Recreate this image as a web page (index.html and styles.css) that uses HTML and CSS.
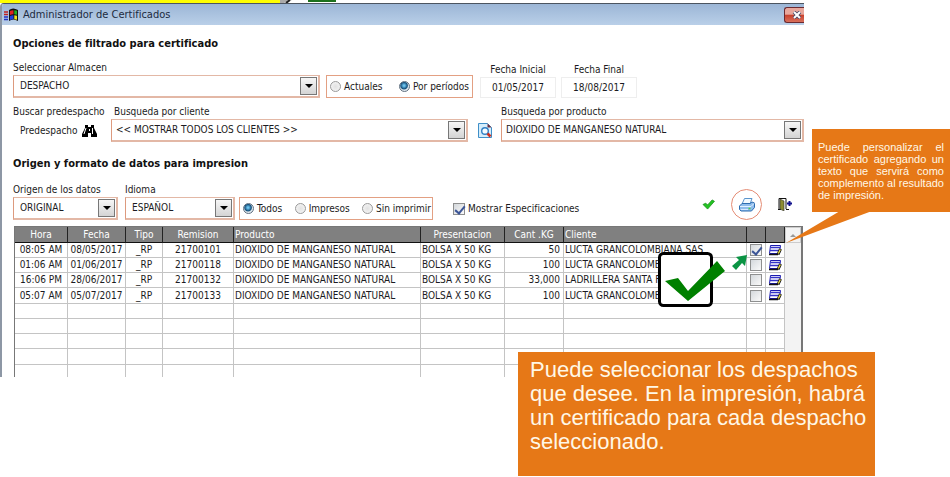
FILE: index.html
```html
<!DOCTYPE html>
<html lang="es">
<head>
<meta charset="utf-8">
<title>Administrador de Certificados</title>
<link rel="stylesheet" href="styles.css">
</head>
<body>
<svg class="defs" aria-hidden="true">
  <symbol id="memo" viewBox="0 0 14 11">
    <path d="M2.500 .5h10l-1 8h-10z" fill="#fff" stroke="#1a1ab0"/>
    <path d="M2.500 2.500h9.500M2 5.500h9.500" stroke="#3434c8" stroke-width="1.400"/>
    <path d="M1 9.500h9" stroke="#111" stroke-width="1.500"/>
    <path d="M12.500 4l-2.500 5.500" stroke="#111" stroke-width="3"/>
    <path d="M12.300 4.500l-2 4" stroke="#f0e040" stroke-width="1.400"/>
  </symbol>
</svg>
<div class="page">
  <main class="screen">
    <div class="backdrop">
      <svg class="backdrop-art" viewBox="0 0 60 3" aria-hidden="true"><path d="M0 0h12L4 3H0z" fill="#aaa"/><path d="M6 3l4-3" stroke="#222" stroke-width="2"/><path d="M28 0h28v2H28z" fill="#1c701c"/></svg>
    </div>
    <section class="window">
      <header class="titlebar">
        <svg class="logo" viewBox="0 0 16 14" aria-hidden="true">
          <path d="M6 2q4-3 9 0v11q-5-3-9 0z" fill="#111"/>
          <path d="M7 3q2-1 3.500-.8v4Q9 6 7 7z" fill="#e02020"/><path d="M11.300 2.200l2.700.6v4l-2.700-.6z" fill="#20b020"/>
          <path d="M7 8q2-1 3.500-.8v4Q9 11 7 12z" fill="#2040e0"/><path d="M11.300 7.200l2.700.6v4l-2.700-.6z" fill="#f0e020"/>
          <path d="M1 4h4M1 6.500h4" stroke="#c02020" stroke-width="1.400"/><path d="M1 9h4M1 11.500h4" stroke="#2030c0" stroke-width="1.400"/>
        </svg>
        <h1>Administrador de Certificados</h1>
        <button class="close" aria-label="Cerrar"><svg viewBox="0 0 10 8" aria-hidden="true"><path d="M2 1l6 6M8 1L2 7" stroke="#444a66" stroke-width="3.600"/><path d="M2 1l6 6M8 1L2 7" stroke="#fff" stroke-width="2"/></svg></button>
      </header>
      <form class="content">
        <h2>Opciones de filtrado para certificado</h2>
        <div class="row row-a">
          <div class="field almacen"><label for="almacen">Seleccionar Almacen</label>
            <div class="combo"><select id="almacen"><option>DESPACHO</option></select></div></div>
          <fieldset class="radios periodo" aria-label="Período">
            <label><input type="radio" name="per">Actuales</label>
            <label><input type="radio" name="per" checked>Por períodos</label>
          </fieldset>
          <div class="field date"><label for="ini">Fecha Inicial</label><input id="ini" type="text" value="01/05/2017"></div>
          <div class="field date"><label for="fin">Fecha Final</label><input id="fin" type="text" value="18/08/2017"></div>
        </div>
        <div class="row row-b">
          <div class="field pre"><span class="label">Buscar predespacho</span>
            <button type="button" class="find">Predespacho
              <svg viewBox="0 0 15 12" width="15" height="12" aria-hidden="true"><path d="M3 0h3v2h3V0h3v3l3 6v3H9V8H6v4H0V9l3-6z" fill="#000"/><path d="M4 3L2 9M10.500 3v6" stroke="#fff"/><path d="M7 4h1v2H7z" fill="#fff"/></svg>
            </button></div>
          <div class="field cliente"><label for="cliente">Busqueda por cliente</label>
            <div class="combo search"><select id="cliente"><option>&lt;&lt; MOSTRAR TODOS LOS CLIENTES &gt;&gt;</option></select></div></div>
          <button type="button" class="icon preview" aria-label="Vista previa"><svg viewBox="0 0 14 15" width="14" height="15" aria-hidden="true"><path d="M.5.500h9l4 4v10H.5z" fill="#d5edfb" stroke="#3f8fc8"/><path d="M9.500.500l4 4h-4z" fill="#703040"/><circle cx="7" cy="8" r="3.300" fill="#f4fbff" stroke="#2f7fc4" stroke-width="1.400"/><path d="M9.500 10.500l3 3" stroke="#d03020" stroke-width="2.600"/></svg></button>
          <div class="field producto"><label for="producto">Busqueda por producto</label>
            <div class="combo search"><select id="producto"><option>DIOXIDO DE MANGANESO NATURAL</option></select></div></div>
        </div>
        <h2>Origen y formato de datos para impresion</h2>
        <div class="row row-c">
          <div class="field origen"><label for="origen">Origen de los datos</label>
            <div class="combo"><select id="origen"><option>ORIGINAL</option></select></div></div>
          <div class="field idioma"><label for="idioma">Idioma</label>
            <div class="combo"><select id="idioma"><option>ESPAÑOL</option></select></div></div>
          <fieldset class="radios estado" aria-label="Estado">
            <label><input type="radio" name="est" checked>Todos</label>
            <label><input type="radio" name="est">Impresos</label>
            <label><input type="radio" name="est">Sin imprimir</label>
          </fieldset>
          <label class="specs"><input type="checkbox" checked>Mostrar Especificaciones</label>
          <div class="actions">
            <button type="button" class="icon" aria-label="Aceptar"><svg viewBox="0 0 14 12" width="13" height="11" aria-hidden="true"><path d="M1 6l3-1.500 2 2L11 1l2.500 1.500L6 11z" fill="#22c322" stroke="#128a12" stroke-width=".8"/></svg></button>
            <button type="button" class="icon print" aria-label="Imprimir"><svg viewBox="0 0 16 14" width="16" height="14" aria-hidden="true"><path d="M5.500 .5h7.500L11 6H3z" fill="#f2faff" stroke="#5a95cc"/><path d="M3 5.500h8l2-1.500 2.500 1v4.500l-3 3.500H2L.5 11.500V8z" fill="#8fbdec" stroke="#2d6cb0"/><path d="M1 8.500h11l3-3" stroke="#e4f2ff" fill="none"/><path d="M2 11.500h7" stroke="#d6eaff"/><path d="M9.500 10.500h2" stroke="#50d040" stroke-width="1.400"/></svg></button>
            <button type="button" class="icon" aria-label="Salir"><svg viewBox="0 0 15 13" width="15" height="13" aria-hidden="true"><path d="M1 11V.5h7V11M0 11.500h3M8 11.500h3" fill="none" stroke="#111"/><path d="M2 1l4 2v10l-4-2z" fill="#8c8c30" stroke="#333" stroke-width=".6"/><path d="M9 5.500h5M11.500 3v5" stroke="#10108c" stroke-width="2"/></svg></button>
          </div>
        </div>
        <div class="grid">
          <table>
            <colgroup><col class="c-hora"><col class="c-fecha"><col class="c-tipo"><col class="c-rem"><col class="c-prod"><col class="c-pres"><col class="c-cant"><col><col class="c-ico"><col class="c-ico"></colgroup>
            <thead><tr><th>Hora</th><th>Fecha</th><th>Tipo</th><th>Remision</th><th class="l">Producto</th><th>Presentacion</th><th>Cant .KG</th><th class="l">Cliente</th><th></th><th></th></tr></thead>
            <tbody>
              <tr><td>08:05 AM</td><td>08/05/2017</td><td>_RP</td><td>21700101</td><td class="l">DIOXIDO DE MANGANESO NATURAL</td><td class="l">BOLSA X 50 KG</td><td class="r">50</td><td class="l">LUCTA GRANCOLOMBIANA SAS</td><td><input type="checkbox" aria-label="Seleccionar 21700101" checked></td><td><svg class="memo"><use href="#memo"/></svg></td></tr>
              <tr><td>01:06 AM</td><td>01/06/2017</td><td>_RP</td><td>21700118</td><td class="l">DIOXIDO DE MANGANESO NATURAL</td><td class="l">BOLSA X 50 KG</td><td class="r">100</td><td class="l">LUCTA GRANCOLOMB</td><td><input type="checkbox" aria-label="Seleccionar 21700118"></td><td><svg class="memo"><use href="#memo"/></svg></td></tr>
              <tr><td>16:06 PM</td><td>28/06/2017</td><td>_RP</td><td>21700132</td><td class="l">DIOXIDO DE MANGANESO NATURAL</td><td class="l">BOLSA X 50 KG</td><td class="r">33,000</td><td class="l">LADRILLERA SANTA F</td><td><input type="checkbox" aria-label="Seleccionar 21700132"></td><td><svg class="memo"><use href="#memo"/></svg></td></tr>
              <tr><td>05:07 AM</td><td>05/07/2017</td><td>_RP</td><td>21700133</td><td class="l">DIOXIDO DE MANGANESO NATURAL</td><td class="l">BOLSA X 50 KG</td><td class="r">100</td><td class="l">LUCTA GRANCOLOMB</td><td><input type="checkbox" aria-label="Seleccionar 21700133"></td><td><svg class="memo"><use href="#memo"/></svg></td></tr>
              <tr><td></td><td></td><td></td><td></td><td></td><td></td><td></td><td></td><td></td><td></td></tr>
              <tr><td></td><td></td><td></td><td></td><td></td><td></td><td></td><td></td><td></td><td></td></tr>
              <tr><td></td><td></td><td></td><td></td><td></td><td></td><td></td><td></td><td></td><td></td></tr>
              <tr><td></td><td></td><td></td><td></td><td></td><td></td><td></td><td></td><td></td><td></td></tr>
              <tr class="cut"><td></td><td></td><td></td><td></td><td></td><td></td><td></td><td></td><td></td><td></td></tr>
            </tbody>
          </table>
          <div class="scroll"><span class="up"></span></div>
          <svg class="bigcheck" viewBox="0 0 92 58" width="92" height="58" aria-hidden="true">
            <rect x="2.500" y="3.500" width="52" height="52" rx="4" fill="#fff" stroke="#000" stroke-width="3"/>
            <path d="M8 31l13-3 10 13 29-30 8 10-37 30z" fill="#008000"/>
            <path d="M75 16l7-6-3-3 11-2-2 11-3-3-6 7z" fill="#0b9444"/>
          </svg>
        </div>
      </form>
    </section>
  </main>
  <aside class="note small">
    <p>Puede personalizar el certificado agregando un texto que servirá como complemento al resultado de impresión.</p>
    <svg class="tail" viewBox="0 0 86 32" width="86" height="32" aria-hidden="true"><path d="M0 32L54 0h32z" fill="#e67817"/></svg>
  </aside>
  <aside class="note large"><p>Puede seleccionar los despachos que desee. En la impresión, habrá un certificado para cada despacho seleccionado.</p></aside>
</div>
</body>
</html>
```

FILE: styles.css
```css
* { box-sizing: border-box; }
body { margin: 0; background: #fff; color: #1b1b22; font: 10px/14px "DejaVu Sans Condensed", "Noto Sans", sans-serif; }
h1, h2, p { margin: 0; }
button, input, select { font: inherit; color: inherit; }
button { background: none; border: 0; padding: 0; }
.defs { position: absolute; width: 0; height: 0; }

.page { position: relative; display: grid; grid-template-columns: minmax(0, 1fr) 138px; column-gap: 8px; align-items: start; min-height: 100vh; }
.backdrop { height: 3px; background: linear-gradient(90deg, #ff0 280px, #fff 280px); }
.backdrop-art { display: block; width: 60px; height: 3px; margin-left: 280px; }

.window { border-left: 2px solid #8d97a5; border-top: 1px solid #4c5560; border-top-left-radius: 4px; overflow: hidden; }
.titlebar { display: flex; align-items: center; gap: 4px; height: 21px; padding-left: 1px; background: linear-gradient(#9cb6d6, #b9cfe8); }
.logo { width: 16px; height: 14px; }
h1 { flex: 1; font-size: 11px; font-weight: 400; color: #1c2a40; }
.close { display: flex; align-items: center; justify-content: flex-end; width: 20px; height: 16px; padding-right: 2px; border: 1px solid #6b2a30; border-right: 0; border-radius: 3px 0 0 3px; background: linear-gradient(#e8a79c 45%, #c8402c 50%, #d8705c); }
.close svg { width: 10px; height: 8px; }

.content { padding: 11px 0 0 11px; }
h2 { font-size: 11px; line-height: 16px; font-weight: 700; color: #111; }
.row { display: flex; align-items: flex-end; }
.row-a { margin-top: 8px; }
.row-b { margin: 6px 0 14px; }
.row-c { margin-top: 10px; }
.field { display: flex; flex-direction: column; }
.field > label, .label { height: 15px; line-height: 15px; white-space: nowrap; }

.combo { position: relative; border: 2px solid #e3b8a6; border-top-width: 1px; border-left: 1px solid #dd9a7e; }
.combo select { display: block; width: 100%; height: 20px; padding: 0 20px 0 6px; appearance: none; border: 0; background: #fff; }
.combo::before { content: ""; position: absolute; top: 1px; right: 1px; bottom: 1px; width: 15px; border: 1px solid #777; background: linear-gradient(#f6f6f6, #d4d4d4); pointer-events: none; }
.combo::after { content: ""; position: absolute; top: 8px; right: 5px; border: 4px solid transparent; border-top-color: #000; border-bottom: 0; pointer-events: none; }
.search select { padding-left: 4px; }

.almacen { width: 307px; }
.radios { display: flex; align-items: center; height: 23px; margin: 0; padding: 0 3px; border: 1px solid #e3a083; white-space: nowrap; }
.radios label, .specs { display: flex; align-items: center; gap: 3px; }
.radios input { width: 11px; height: 11px; margin: 0; appearance: none; border: 1px solid #9a9a9a; border-radius: 50%; background: radial-gradient(#e2e2e2, #f8f8f8); }
.radios input:checked { border-color: #5f6f7f; background: radial-gradient(circle at 45% 40%, #6cc3ee 10%, #14507c 45%, #dfe8ee 60%); }
.periodo { width: 147px; margin: 0 7px 0 6px; justify-content: space-between; }
.date { width: 76px; margin-right: 5px; }
.date > label { text-align: center; }
.date input { width: 100%; height: 21px; border: 1px solid #eee; padding: 0; text-align: center; background: #fff; }

.pre { width: 98px; }
.find { display: flex; align-items: center; height: 23px; gap: 4px; padding-left: 7px; white-space: nowrap; }
.cliente { width: 357px; }
.cliente > label { padding-left: 3px; }
.preview { margin: 0 9px 4px 10px; }
.producto { flex: 1; }
.icon { display: flex; align-items: center; justify-content: center; }

.origen { width: 105px; margin-right: 7px; }
.idioma { width: 110px; margin-right: 4px; }
.estado { width: 194px; padding-right: 1px; justify-content: space-between; }
.specs { height: 22px; margin-left: 20px; white-space: nowrap; }
[type="checkbox"] { position: relative; width: 12px; height: 12px; margin: 0; appearance: none; border: 1px solid #8e8f8f; background: linear-gradient(135deg, #d4d8dc, #fafafa); }
[type="checkbox"]:checked::after { content: ""; position: absolute; left: 3px; top: 0; width: 4px; height: 8px; border: solid #3b5597; border-width: 0 2px 2px 0; transform: rotate(40deg); }
.actions { display: flex; align-items: center; gap: 16px; margin: 0 11px 0 auto; }
.print { width: 31px; height: 31px; border: 1px solid #e58c74; border-radius: 50%; }

.grid { position: relative; display: flex; margin: 6px 1px 0 1px; border: 1px solid #777; border-width: 1px 2px 0 1px; }
table { flex: 1; min-width: 0; table-layout: fixed; border-collapse: separate; border-spacing: 0; }
.c-hora { width: 53px; } .c-fecha { width: 58px; } .c-tipo { width: 37px; } .c-rem { width: 71px; } .c-prod { width: 187px; } .c-pres { width: 84px; } .c-cant { width: 59px; } .c-ico { width: 19px; }
th, td { padding: 0; text-align: center; white-space: nowrap; overflow: hidden; }
th { height: 16px; font-weight: 400; line-height: 14px; color: #fff; background: #808080; border-right: 1px solid #222; border-bottom: 1px solid #111; }
td { height: 15px; line-height: 14px; border-right: 1px solid #c4c4c4; border-bottom: 1px solid #c4c4c4; }
tr:nth-child(4n) td { height: 16px; }
.cut td { height: 12px; border-bottom: 0; }
th.l, td.l { text-align: left; padding-left: 1px; }
td.r { text-align: right; padding-right: 3px; }
td input, .memo { display: block; margin: 0 auto !important; }
.memo { width: 14px; height: 11px; }
.scroll { width: 16px; background: #f3f3f3; }
.up { display: flex; align-items: center; justify-content: center; height: 16px; border: 1px solid #ccc; }
.up::before { content: ""; border: 3px solid transparent; border-top: 0; border-bottom-color: #999; }
.bigcheck { position: absolute; top: 23px; right: 52px; }

.note { background: #e67817; color: #fff7e6; font-family: "Liberation Sans", sans-serif; }
.small { position: relative; margin-top: 129px; padding: 12px 6px 11px; font-size: 11px; line-height: 12px; text-align: justify; }
.tail { position: absolute; right: 78px; top: 82px; }
.large { position: absolute; left: 518px; top: 352px; width: 357px; padding: 6px 4px 22px 12px; font-size: 22px; line-height: 24px; }
```
